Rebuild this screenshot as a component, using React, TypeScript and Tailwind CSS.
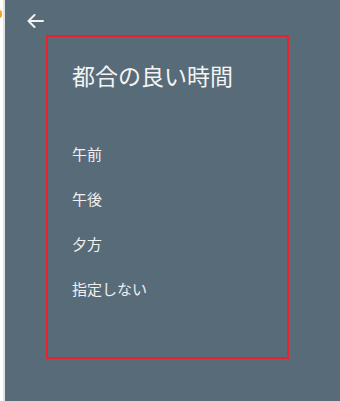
import React from "react";

const slots = ["午前", "午後", "夕方", "指定しない"];

export default function App() {
  return (
    <div
      className="flex h-[401px] w-[340px] overflow-hidden bg-white"
      style={{ fontFamily: '"Noto Sans CJK JP", "Noto Sans", sans-serif' }}
    >
      {/* 左端の細いストリップ */}
      <div className="relative h-full w-[5px] shrink-0 border-r-2 border-[#e3e3e3] bg-white">
        <div className="absolute left-[-3px] top-[10px] h-[8px] w-[5px] rounded-full bg-[#f5a623]" />
      </div>

      <div className="relative flex-1 bg-[#586b79]">
        {/* 戻るボタン */}
        <button type="button" className="absolute left-[22px] top-[14px] flex h-[14px] w-[17px]">
          <svg width="17" height="14" viewBox="0 0 17 14" fill="none">
            <path
              d="M16 7H1.5M7.5 1L1.5 7L7.5 13"
              stroke="#f2f2f2"
              strokeWidth="2"
              strokeLinecap="round"
              strokeLinejoin="round"
            />
          </svg>
        </button>

        <div className="ml-[41px] mt-[35px] h-[324px] w-[243px] border-2 border-[#e8232b] px-[24px] pt-[22px]">
          <h2 className="text-[23px] font-normal leading-[32px] text-[#f4f4f4]">
            都合の良い時間
          </h2>
          <ul className="mt-[40px]">
            {slots.map((slot) => (
              <li
                key={slot}
                className="flex h-[45px] items-center text-[15px] leading-none text-[#f0f0f0]"
              >
                {slot}
              </li>
            ))}
          </ul>
        </div>
      </div>
    </div>
  );
}
